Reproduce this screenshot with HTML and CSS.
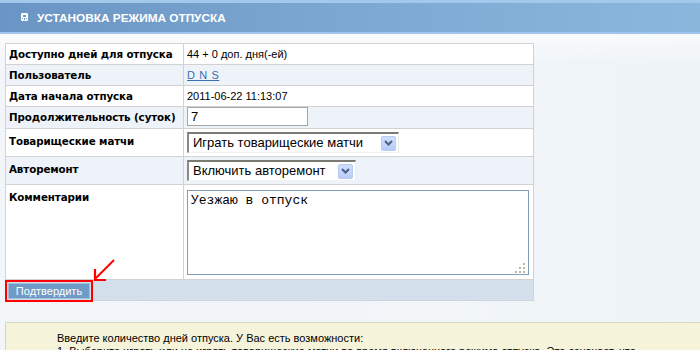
FILE: index.html
```html
<!DOCTYPE html>
<html lang="ru">
<head>
<meta charset="utf-8">
<title>Установка режима отпуска</title>
<link rel="stylesheet" href="styles.css">
</head>
<body>
<div class="topbar">
  <svg class="ticon" width="7" height="8" viewBox="0 0 7 8">
    <rect x="0" y="0" width="7" height="8" rx="1.2" fill="#ffffff"/>
    <rect x="2" y="2" width="3" height="2" fill="#6d97c6"/>
    <rect x="1" y="5" width="1" height="1" fill="#6d97c6"/>
    <rect x="3" y="5" width="1" height="2" fill="#6d97c6"/>
    <rect x="5" y="5" width="1" height="1" fill="#6d97c6"/>
  </svg>
  <span class="ttext">УСТАНОВКА РЕЖИМА ОТПУСКА</span>
</div>

<div class="content">
  <table class="form">
    <colgroup><col class="c1"><col class="c2"></colgroup>
    <tr class="r-short">
      <th>Доступно дней для отпуска</th>
      <td>44 + 0 доп. дня(-ей)</td>
    </tr>
    <tr class="r-short alt">
      <th>Пользователь</th>
      <td><a class="ulink" href="#">D N S</a></td>
    </tr>
    <tr class="r-short">
      <th>Дата начала отпуска</th>
      <td>2011-06-22 11:13:07</td>
    </tr>
    <tr class="r-input alt">
      <th>Продолжительность (суток)</th>
      <td class="ctl"><div class="textbox">7</div></td>
    </tr>
    <tr class="r-select">
      <th class="lbl-low">Товарищеские матчи</th>
      <td class="ctl-sel"><div class="select s1"><span class="stext">Играть товарищеские матчи</span><span class="sbtn"><svg width="9" height="6" viewBox="0 0 9 6"><path d="M1 1 L4.5 4.5 L8 1" fill="none" stroke="#4a5f86" stroke-width="2"/></svg></span></div></td>
    </tr>
    <tr class="r-select alt">
      <th class="lbl-low">Авторемонт</th>
      <td class="ctl-sel"><div class="select s2"><span class="stext">Включить авторемонт</span><span class="sbtn"><svg width="9" height="6" viewBox="0 0 9 6"><path d="M1 1 L4.5 4.5 L8 1" fill="none" stroke="#4a5f86" stroke-width="2"/></svg></span></div></td>
    </tr>
    <tr class="r-area">
      <th class="lbl-low">Комментарии</th>
      <td class="ctl-area">
        <div class="area">Уезжаю в отпуск<svg class="grip" width="10" height="10" viewBox="0 0 10 10">
            <rect x="8" y="0" width="2" height="2" fill="#bab5a0"/>
            <rect x="4" y="4" width="2" height="2" fill="#bab5a0"/>
            <rect x="8" y="4" width="2" height="2" fill="#bab5a0"/>
            <rect x="0" y="8" width="2" height="2" fill="#bab5a0"/>
            <rect x="4" y="8" width="2" height="2" fill="#bab5a0"/>
            <rect x="8" y="8" width="2" height="2" fill="#bab5a0"/>
          </svg></div>
      </td>
    </tr>
  </table>
  <div class="actions">
    <div class="hl"><span class="btn">Подтвердить</span></div>
    <svg class="arrow" width="30" height="30" viewBox="0 0 30 30">
      <path d="M23 5 L4 24" stroke="#ff0000" stroke-width="2" fill="none"/>
      <path d="M4 14 L4 25 L15 25" stroke="#ff0000" stroke-width="2.2" fill="none"/>
    </svg>
  </div>

  <div class="info">
    <p>Введите количество дней отпуска. У Вас есть возможности:</p>
    <p>1. Выберите играть или не играть товарищеские матчи во время включенного режима отпуска. Это означает, что</p>
  </div>
</div>
</body>
</html>
```
FILE: styles.css
```css
html, body {
  margin: 0;
  padding: 0;
}
body {
  background: linear-gradient(90deg, #f3f6f9 0%, #f0f4f8 40%, #f2f6f9 60%, #eef3f7 100%);
  font-family: "Liberation Sans", Arial, sans-serif;
  font-size: 11px;
  color: #000;
  overflow: hidden;
  width: 700px;
  height: 350px;
}
.topbar {
  height: 29px;
  border-top: 3px solid #a2c8ec;
  border-bottom: 2px solid #9ec6ea;
  background: linear-gradient(90deg, #6a95c4 0%, #7ba6d1 45%, #8bb7dd 100%);
  display: flex;
  align-items: center;
  padding-left: 21px;
  box-sizing: content-box;
}
.ticon {
  display: block;
  margin-right: 9px;
  margin-top: -1px;
}
.ttext {
  color: #fff;
  font-family: "Liberation Sans", Arial, sans-serif;
  font-weight: bold;
  font-size: 11.8px;
}
.content {
  padding: 9px 0 0 5px;
  background: linear-gradient(180deg, rgba(255,255,255,0.6), rgba(255,255,255,0) 30px);
}
.form {
  border-collapse: collapse;
  table-layout: fixed;
  width: 529px;
  background: #fff;
}
.c1 { width: 178px; }
.form th, .form td {
  border: 1px solid #d2d2d2;
  vertical-align: top;
  padding: 3px 3px 0 3px;
  line-height: 14px;
  text-align: left;
  white-space: nowrap;
  overflow: hidden;
}
.form th {
  font-family: "DejaVu Sans", Verdana, sans-serif;
  font-size: 10.3px;
  letter-spacing: -0.1px;
  font-weight: bold;
  padding-left: 3px;
  padding-right: 0;
}
.form tr.alt th, .form tr.alt td {
  background: #eef3fa;
}
.r-short th, .r-short td { height: 17px; }
.r-input th, .r-input td { height: 18px; }
.r-select th, .r-select td { height: 24px; }
.r-area th, .r-area td { height: 89px; }
.form th.lbl-low { padding-top: 5px; }
.r-select th.lbl-low { height: 22px; }
.r-area th.lbl-low { height: 87px; }
.ulink {
  color: #3b6eb0;
  text-decoration: underline;
  letter-spacing: 0.6px;
}
.form td.ctl { padding: 0 3px; height: 21px; }
.textbox {
  width: 116px;
  height: 17px;
  border: 1px solid #a5a5a5;
  background: #fff;
  font-size: 13px;
  line-height: 17px;
  padding-left: 3px;
}
.form td.ctl-sel { padding: 3px 3px 0 3px; }
.select {
  display: flex;
  align-items: center;
  height: 18px;
  border-style: solid;
  border-width: 2px 1px 1px 2px;
  border-color: #7b7b73 #ececec #f2f2f2 #8a8a82;
  background: #fff;
  padding: 0 2px 0 4px;
}
.s1 { width: 203px; }
.s2 { width: 160px; }
.stext {
  flex: 1;
  font-size: 13px;
  white-space: nowrap;
}
.sbtn {
  width: 15px;
  height: 15px;
  box-sizing: border-box;
  border: 1px solid #b8cbf3;
  border-radius: 2px;
  background: linear-gradient(180deg, #d0defc, #b8ccf8);
  display: flex;
  align-items: center;
  justify-content: center;
}
.form td.ctl-area { padding: 5px 3px 0 3px; }
.area {
  position: relative;
  width: 334px;
  height: 79px;
  border: 1px solid #7f9db9;
  background: #fff;
  font-family: "Liberation Mono", "Courier New", monospace;
  font-size: 13px;
  line-height: 15px;
  padding: 2px 3px;
}
.grip {
  position: absolute;
  right: 3px;
  bottom: 1px;
}
.actions {
  position: relative;
  width: 527px;
  height: 20px;
  background: #d3e0eb;
  border: 1px solid #cbd6e0;
  border-top: none;
  padding: 0;
}
.hl {
  display: inline-flex;
  border: 2px solid #ff0000;
  padding: 1px;
  margin-left: -1px;
  margin-top: 0;
}
.btn {
  display: block;
  width: 80px;
  height: 14px;
  background: #6f9bc7;
  border: 1px solid #a4bfd9;
  color: #fff;
  font-size: 11px;
  line-height: 14px;
  text-align: center;
}
.arrow {
  position: absolute;
  left: 85px;
  top: -25px;
}
.info {
  margin-top: 21px;
  margin-right: -20px;
  background: #f6f3db;
  border: 1px solid #d8d6c2;
  padding: 9px 0 0 51px;
  height: 40px;
}
.info p {
  margin: 0;
  line-height: 13px;
  white-space: nowrap;
}
```
